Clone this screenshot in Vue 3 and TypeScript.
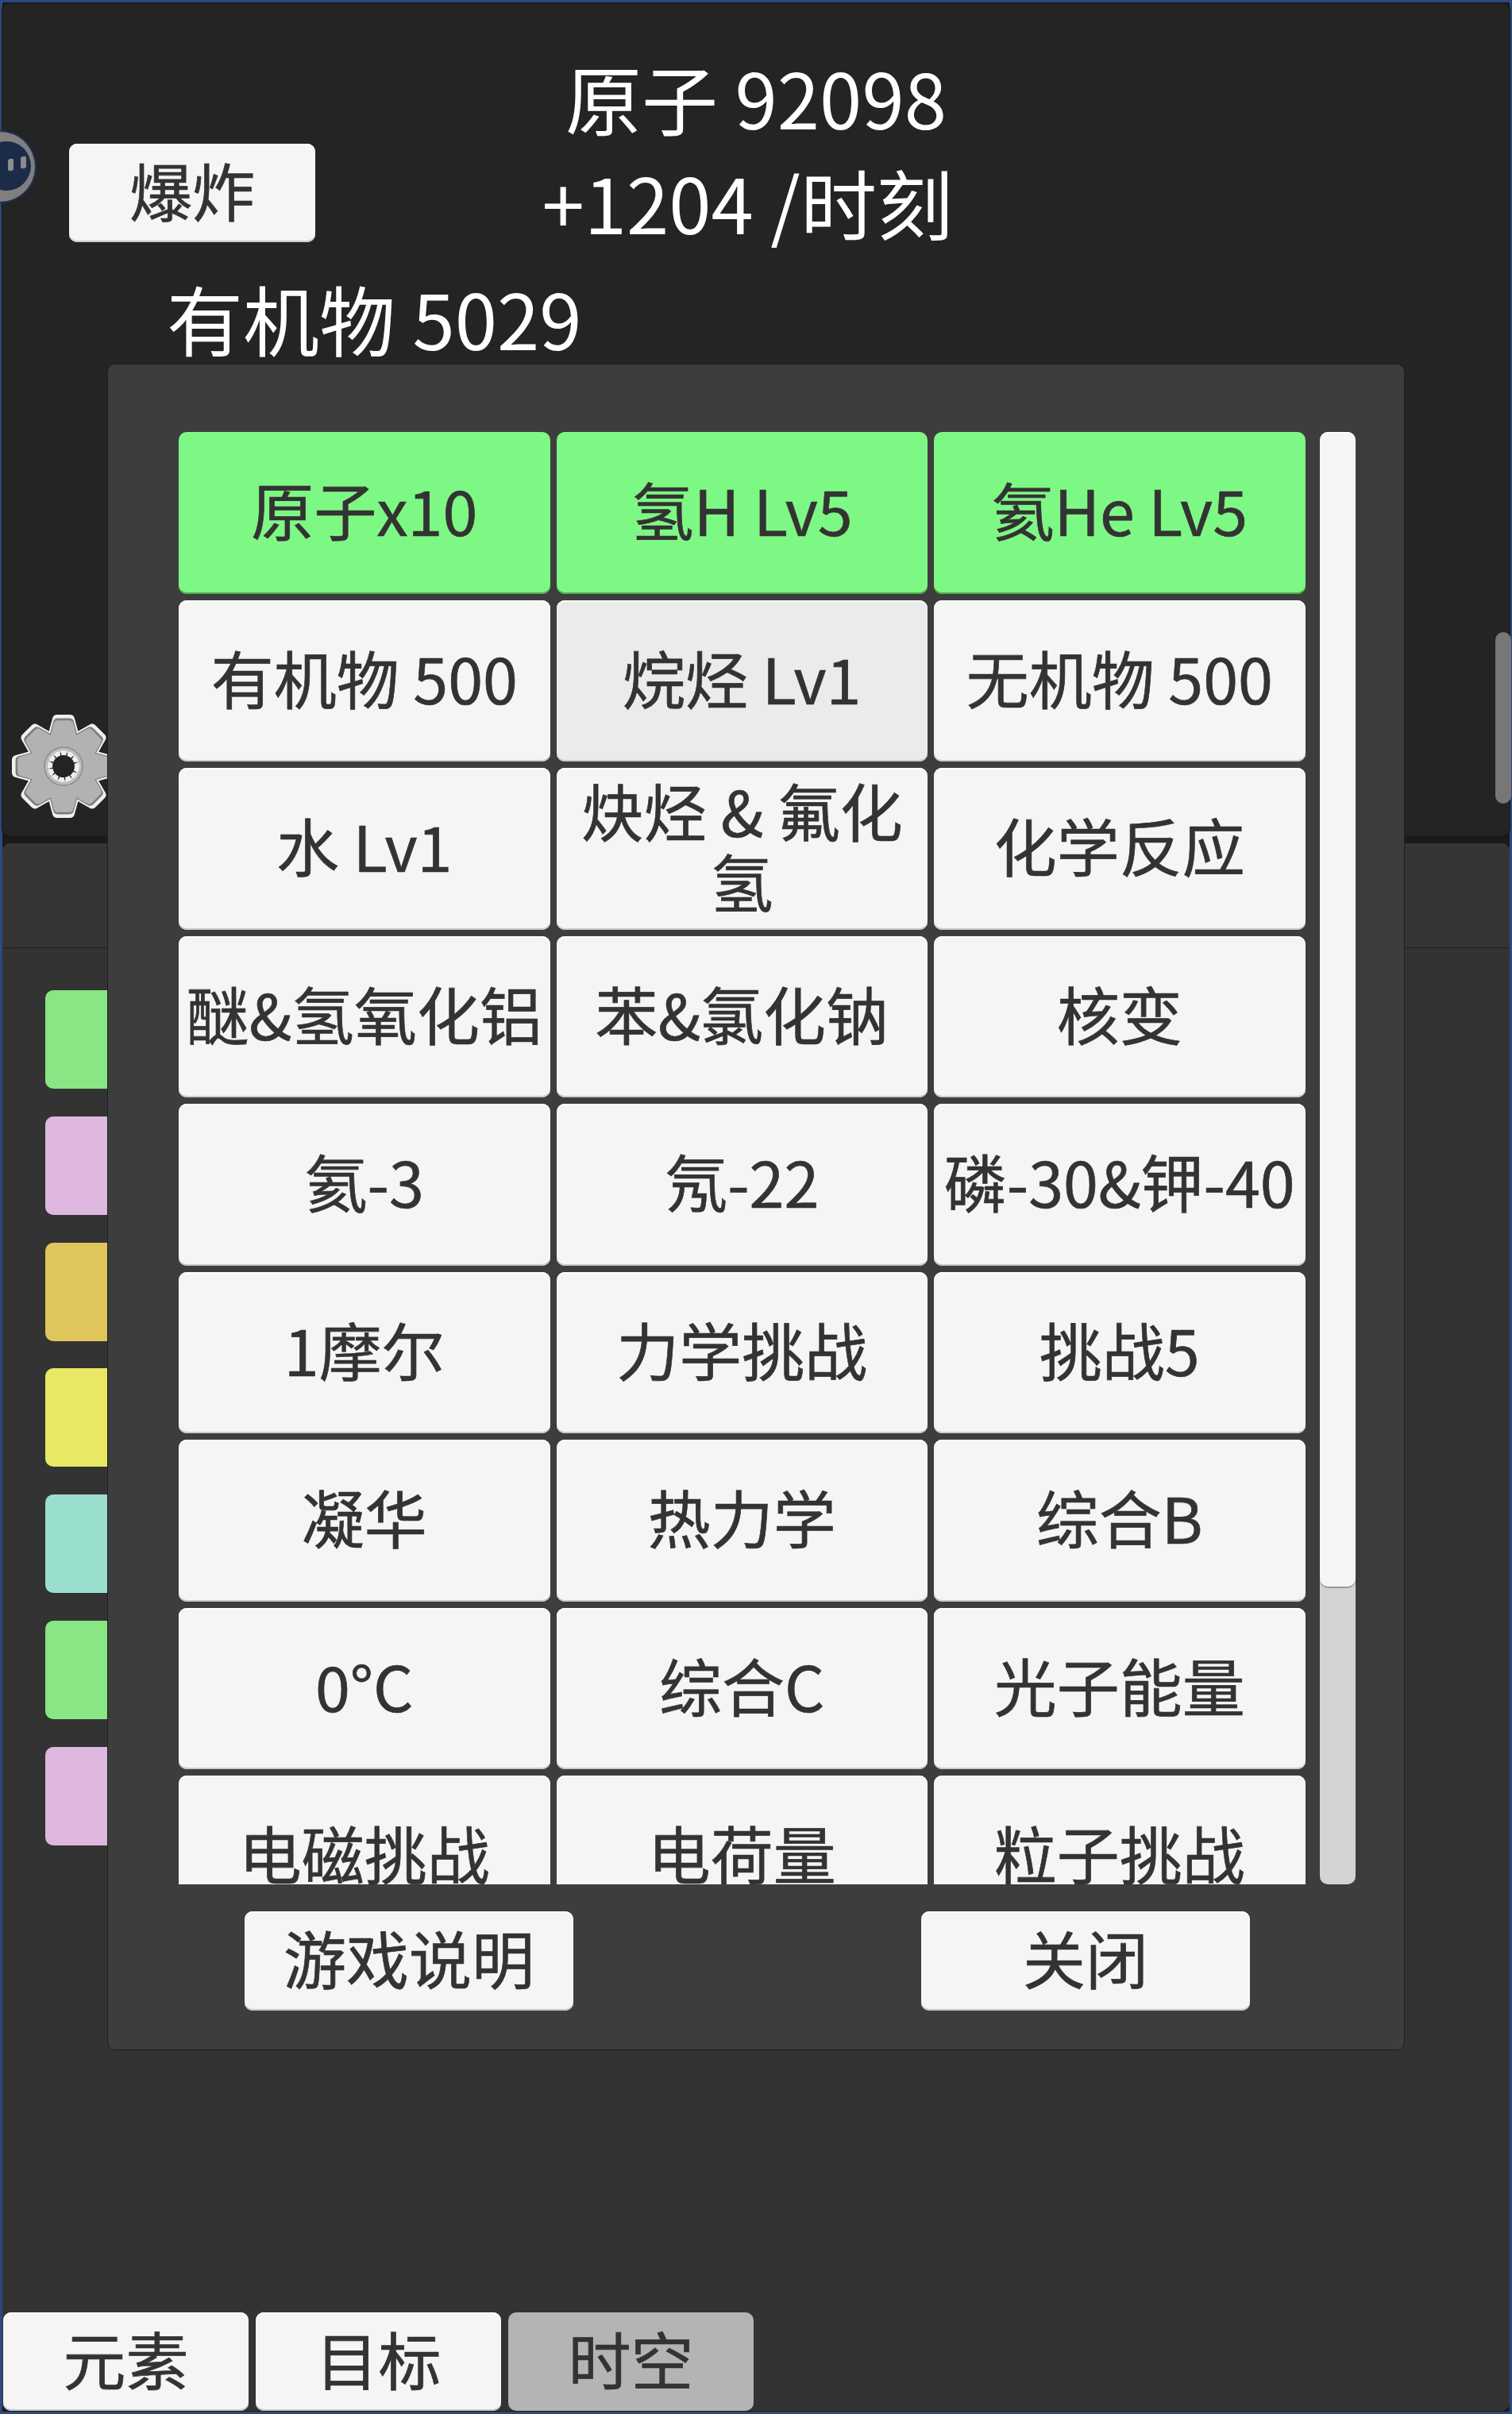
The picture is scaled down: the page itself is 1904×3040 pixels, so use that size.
<script setup lang="ts">
const cells: { t: string; k?: string }[] = [
  { t: '原子x10', k: 'on' }, { t: '氢H Lv5', k: 'on' }, { t: '氦He Lv5', k: 'on' },
  { t: '有机物 500' }, { t: '烷烃 Lv1', k: 'dim' }, { t: '无机物 500' },
  { t: '水 Lv1' }, { t: '炔烃 & 氟化氢' }, { t: '化学反应' },
  { t: '醚&氢氧化铝' }, { t: '苯&氯化钠' }, { t: '核变' },
  { t: '氦-3' }, { t: '氖-22' }, { t: '磷-30&钾-40' },
  { t: '1摩尔' }, { t: '力学挑战' }, { t: '挑战5' },
  { t: '凝华' }, { t: '热力学' }, { t: '综合B' },
  { t: '0°C' }, { t: '综合C' }, { t: '光子能量' },
  { t: '电磁挑战' }, { t: '电荷量' }, { t: '粒子挑战' },
]
const swatches = ['#88e685', '#ddb7de', '#e1c55d', '#e8e864', '#9adfcd', '#88e685', '#ddb7de']
const tabs = [{ t: '元素' }, { t: '目标' }, { t: '时空', k: 'sel' }]
const teeth = [0, 45, 90, 135, 180, 225, 270, 315]
const toothPath = 'M-20 -38 L-14 -60 Q-13 -65 -8 -65 L8 -65 Q13 -65 14 -60 L20 -38 Z'
</script>

<template>
  <div class="page">
    <section class="top">
      <div class="head">
        <div class="headLeft">
          <button class="btn boom">爆炸</button>
        </div>
        <div class="titles">
          <div class="line">原子 92098</div>
          <div class="line">+1204 /时刻&nbsp;</div>
        </div>
      </div>
      <div class="line organic">有机物 5029</div>
      <svg class="gear" viewBox="-66 -66 132 132" width="132" height="132">
        <g fill="#f0f0f0">
          <path v-for="a in teeth" :key="a" :d="toothPath" :transform="`rotate(${a})`" />
          <circle r="47" />
        </g>
        <g fill="#7c7c7c" transform="scale(0.93)">
          <path v-for="a in teeth" :key="a" :d="toothPath" :transform="`rotate(${a})`" />
          <circle r="47" />
        </g>
        <g fill="#b2b2b2" transform="scale(0.89)">
          <path v-for="a in teeth" :key="a" :d="toothPath" :transform="`rotate(${a})`" />
          <circle r="47" />
        </g>
        <circle r="24" fill="#bcbcbc" stroke="#8c8c8c" stroke-width="1.5" />
        <circle r="17" fill="#242424" stroke="#eeeeee" stroke-width="6" stroke-dasharray="7 1.5" />
      </svg>
      <div class="vbar"></div>
    </section>

    <section class="lower">
      <div class="tabstrip"></div>
      <div class="content">
        <div class="swatches">
          <div v-for="(c, i) in swatches" :key="i" class="swatch" :style="{ background: c }"></div>
        </div>
        <nav class="tabs">
          <button v-for="tab in tabs" :key="tab.t" class="btn tab" :class="tab.k">{{ tab.t }}</button>
        </nav>
      </div>
    </section>

    <div class="float">
      <div class="floatCore"></div>
      <span class="pip pipA"></span>
      <span class="pip pipB"></span>
    </div>

    <div class="modal">
      <div class="listRow">
        <div class="scroller">
          <div class="grid">
            <button v-for="c in cells" :key="c.t" class="btn cell" :class="c.k">{{ c.t }}</button>
          </div>
        </div>
        <div class="track"><div class="thumb"></div></div>
      </div>
      <div class="foot">
        <button class="btn action">游戏说明</button>
        <button class="btn action">关闭</button>
      </div>
    </div>
  </div>
</template>

<style scoped>
.page {
  position: relative;
  width: 1904px;
  height: 3040px;
  box-sizing: border-box;
  overflow: hidden;
  padding: 4px 3px 4px 3px;
  display: flex;
  flex-direction: column;
  gap: 9px;
  background: #1a1a1a;
  box-shadow: inset 3px 0 0 #2b4a7e, inset -3px 0 0 #2b4a7e, inset 0 3px 0 #2b4a7e, inset 0 -3px 0 #2b4a7e;
  font-family: "Noto Sans CJK SC", sans-serif;
}
.top {
  position: relative;
  flex: none;
  height: 1049px;
  border-radius: 10px;
  background: #242424;
  box-shadow: 0 0 0 1px #161616;
  color: #fff;
}
.head {
  display: flex;
  height: 325px;
}
.headLeft {
  width: 84px;
  padding-top: 177px;
  flex: none;
}
.titles {
  flex: 1;
  padding-top: 52px;
  padding-right: 84px;
  text-align: center;
}
.line {
  font-size: 96px;
  line-height: 132px;
  white-space: nowrap;
}
.organic {
  padding-left: 207px;
  margin-top: 5px;
}
.btn {
  display: block;
  box-sizing: border-box;
  margin: 0;
  padding: 0 0 10px;
  border: none;
  border-radius: 10px;
  background: #f5f5f5;
  color: #333;
  font-family: inherit;
  font-size: 79px;
  line-height: 89px;
  -webkit-text-stroke: 0.7px #333;
  box-shadow: inset 0 2px 0 #fff, inset 0 -2px 0 #c9c9c9;
}
.boom {
  width: 310px;
  height: 124px;
  margin-left: 84px;
}
.gear {
  position: absolute;
  left: 11px;
  top: 895px;
  filter: blur(0.6px);
}
.vbar {
  position: absolute;
  left: 1880px;
  top: 792px;
  width: 20px;
  height: 216px;
  border-radius: 10px;
  background: #777;
}
.lower {
  flex: 1;
  display: flex;
  flex-direction: column;
  background: #333;
  border-radius: 10px;
  min-height: 0;
}
.tabstrip {
  height: 131px;
  flex: none;
  border-radius: 10px 10px 0 0;
  background: #353535;
  border-bottom: 1px solid #1f1f1f;
}
.content {
  flex: 1;
  display: flex;
  flex-direction: column;
  justify-content: space-between;
  padding: 53px 0 0 1px;
  background: #333;
  border-radius: 10px;
}
.swatches {
  display: flex;
  flex-direction: column;
  gap: 34.8px;
  padding-left: 53px;
}
.swatch {
  width: 200px;
  height: 124px;
  border-radius: 10px;
}
.tabs {
  display: flex;
  gap: 9px;
}
.tab {
  width: 309px;
  height: 124px;
}
.tab.sel {
  background: #b4b4b4;
  box-shadow: none;
}
.float {
  position: absolute;
  left: -44px;
  top: 166px;
  width: 88px;
  height: 88px;
  border-radius: 50%;
  background: #7f7f7f;
  box-shadow: 0 0 0 2px #1f3354;
}
.floatCore {
  position: absolute;
  left: 21px;
  top: 12px;
  width: 62px;
  height: 62px;
  border-radius: 50%;
  background: #1c2c48;
}
.pip {
  position: absolute;
  width: 7px;
  height: 15px;
  border-radius: 2px;
  background: #8c8c8c;
  transform: skewY(-6deg);
}
.pipA { left: 54px; top: 34px; }
.pipB { left: 70px; top: 31px; }
.modal {
  position: absolute;
  left: 135px;
  top: 458px;
  width: 1634px;
  height: 2124px;
  box-sizing: border-box;
  padding: 85px 0 0 89px;
  border: 1px solid #1e1e1e;
  border-radius: 10px;
  background: #3d3d3d;
}
.listRow {
  display: flex;
  gap: 18px;
  height: 1829px;
}
.scroller {
  width: 1419px;
  overflow: hidden;
}
.grid {
  display: grid;
  grid-template-columns: repeat(3, 467.5px);
  grid-auto-rows: 203.5px;
  gap: 8px;
}
.cell {
  padding: 0 4px 10px;
  white-space: normal;
  overflow: visible;
}
.cell.on {
  background: #7ef884;
  box-shadow: inset 0 -2px 0 #4fb056;
}
.cell.dim {
  background: #ebebeb;
}
.track {
  width: 45px;
  border-radius: 10px;
  background: #d3d3d3;
  overflow: hidden;
}
.thumb {
  height: 1456px;
  border-radius: 10px;
  background: #f5f5f5;
  box-shadow: inset 0 2px 0 #fff, inset 0 -2px 0 #9a9a9a;
}
.foot {
  display: flex;
  justify-content: space-between;
  padding: 34px 194px 0 83px;
}
.action {
  width: 414px;
  height: 125px;
}
</style>
